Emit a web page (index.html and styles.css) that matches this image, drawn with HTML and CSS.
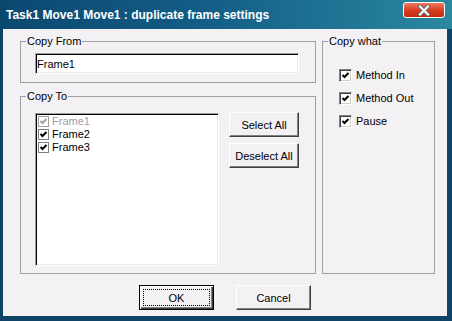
FILE: index.html
```html
<!DOCTYPE html>
<html lang="en">
<head>
<meta charset="UTF-8">
<title>duplicate frame settings</title>
<link rel="stylesheet" href="styles.css">
</head>
<body>

<div class="window">
  <div class="titlebar">
    <span class="title">Task1 Move1 Move1 : duplicate frame settings</span>
    <button class="close">
      <svg width="12" height="11" viewBox="0 0 12 11">
        <path d="M2 1.5 L10 9.5 M10 1.5 L2 9.5" stroke="#6b6b6b" stroke-width="4" stroke-linecap="square"/>
        <path d="M2 1.5 L10 9.5 M10 1.5 L2 9.5" stroke="#fff" stroke-width="2" stroke-linecap="square"/>
      </svg>
    </button>
  </div>

  <div class="client">
    <div class="groups">
      <div class="left-col">
        <fieldset class="group copy-from">
          <legend>Copy From</legend>
          <input class="edit" type="text" value="Frame1">
        </fieldset>

        <fieldset class="group copy-to">
          <legend>Copy To</legend>
          <div class="copy-to-row">
            <div class="listbox">
              <div class="item disabled">
                <span class="listcheck"><svg width="9" height="9" viewBox="0 0 9 9"><polyline points="1.5,4 3.5,6 7.5,2" fill="none" stroke="#a0a0a0" stroke-width="2"/></svg></span>Frame1
              </div>
              <div class="item">
                <span class="listcheck"><svg width="9" height="9" viewBox="0 0 9 9"><polyline points="1.5,4 3.5,6 7.5,2" fill="none" stroke="#000" stroke-width="2"/></svg></span>Frame2
              </div>
              <div class="item">
                <span class="listcheck"><svg width="9" height="9" viewBox="0 0 9 9"><polyline points="1.5,4 3.5,6 7.5,2" fill="none" stroke="#000" stroke-width="2"/></svg></span>Frame3
              </div>
            </div>
            <div class="side-buttons">
              <button class="btn">Select All</button>
              <button class="btn">Deselect All</button>
            </div>
          </div>
        </fieldset>
      </div>

      <fieldset class="group copy-what">
        <legend>Copy what</legend>
        <div class="options">
          <div class="option"><span class="checkbox"><svg width="9" height="9" viewBox="0 0 9 9"><polyline points="1.5,4 3.5,6 7.5,2" fill="none" stroke="#000" stroke-width="2"/></svg></span>Method In</div>
          <div class="option"><span class="checkbox"><svg width="9" height="9" viewBox="0 0 9 9"><polyline points="1.5,4 3.5,6 7.5,2" fill="none" stroke="#000" stroke-width="2"/></svg></span>Method Out</div>
          <div class="option"><span class="checkbox"><svg width="9" height="9" viewBox="0 0 9 9"><polyline points="1.5,4 3.5,6 7.5,2" fill="none" stroke="#000" stroke-width="2"/></svg></span>Pause</div>
        </div>
      </fieldset>
    </div>

    <div class="actions">
      <button class="btn wide default">OK</button>
      <button class="btn wide">Cancel</button>
    </div>
  </div>
</div>

</body>
</html>
```

FILE: styles.css
```css
body {
  margin: 0;
  font-family: "Liberation Sans", Arial, sans-serif;
  font-size: 11px;
  color: #000;
}
.window {
  width: 452px;
  height: 321px;
  background-color: #0e4466;
  display: flex;
  flex-direction: column;
}
.titlebar {
  height: 29px;
  display: flex;
  align-items: flex-start;
  background: linear-gradient(to right, #0b4870, #135d86 45%, #2a88a0);
}
.title {
  flex: 1;
  color: #fff;
  font-weight: bold;
  font-size: 12px;
  line-height: 30px;
  padding-left: 6px;
  white-space: nowrap;
}
.close {
  width: 42px;
  height: 16px;
  margin: 2px 7px 0 0;
  padding: 0;
  border: 1px solid #fff;
  border-radius: 3px;
  background: linear-gradient(#ec7a60, #d63d1e 55%, #c22c0c);
  display: flex;
  align-items: center;
  justify-content: center;
}
.client {
  flex: 1;
  margin: 0 5px 5px 3px;
  padding-top: 6px;
  background-color: #f4f1f4;
}
.groups {
  display: flex;
  gap: 6px;
  margin-left: 17px;
}
.left-col {
  width: 296px;
  display: flex;
  flex-direction: column;
  gap: 7px;
}
.group {
  box-sizing: border-box;
  margin: 0;
  padding: 0;
  min-width: 0;
  border: 1px solid #a0a0a0;
}
.group legend {
  margin-left: 5px;
  padding: 0 1px;
  line-height: 13px;
}
.copy-from {
  height: 48px;
}
.edit {
  box-sizing: border-box;
  width: 264px;
  height: 21px;
  margin: 5px 0 0 14px;
  padding: 0 0 0 1px;
  font: inherit;
  color: #000;
  background: #fff;
  border: 1px solid;
  border-color: #a0a0a0 #fff #fff #a0a0a0;
  box-shadow: inset 1px 1px 0 #000, inset -1px -1px 0 #ece9ec;
  outline: none;
}
.copy-to {
  height: 184px;
}
.copy-to-row {
  display: flex;
  gap: 10px;
  margin: 9px 0 0 14px;
}
.listbox {
  box-sizing: border-box;
  width: 184px;
  height: 153px;
  margin-top: 1px;
  background: #fff;
  border: 1px solid;
  border-color: #a0a0a0 #fff #fff #a0a0a0;
  box-shadow: inset 1px 1px 0 #000, inset -1px -1px 0 #ece9ec;
  padding-top: 1px;
}
.item {
  height: 13px;
  line-height: 13px;
  display: flex;
  align-items: center;
  gap: 3px;
  padding-left: 2px;
}
.item.disabled {
  color: #a0a0a0;
}
.listcheck {
  box-sizing: border-box;
  width: 11px;
  height: 11px;
  border: 1px solid #808080;
  background: #fff;
  display: flex;
}
.item.disabled .listcheck {
  border-color: #a0a0a0;
}
.side-buttons {
  display: flex;
  flex-direction: column;
  gap: 6px;
}
.btn {
  box-sizing: border-box;
  width: 70px;
  height: 25px;
  padding: 0;
  font: inherit;
  color: #000;
  background-color: #f4f1f4;
  border: 1px solid;
  border-color: #fff #404040 #404040 #fff;
  box-shadow: inset -1px -1px 0 #808080;
}
.btn.wide {
  width: 75px;
}
.btn.default {
  border: 1px solid #000;
  box-shadow: inset 1px 1px 0 #fff, inset -1px -1px 0 #404040, inset -2px -2px 0 #808080;
  outline: 1px dotted #000;
  outline-offset: -5px;
}
.copy-what {
  width: 113px;
  height: 239px;
}
.options {
  display: flex;
  flex-direction: column;
  gap: 10px;
  margin-top: 21px;
  padding-left: 16px;
}
.option {
  height: 13px;
  line-height: 13px;
  display: flex;
  align-items: center;
  gap: 4px;
}
.checkbox {
  box-sizing: border-box;
  width: 13px;
  height: 13px;
  padding: 1px;
  background: #fff;
  border: 1px solid;
  border-color: #808080 #fff #fff #808080;
  box-shadow: inset 1px 1px 0 #404040, inset -1px -1px 0 #d4d0c8;
  display: flex;
}
.actions {
  display: flex;
  justify-content: center;
  gap: 22px;
  margin-top: 11px;
}
```
